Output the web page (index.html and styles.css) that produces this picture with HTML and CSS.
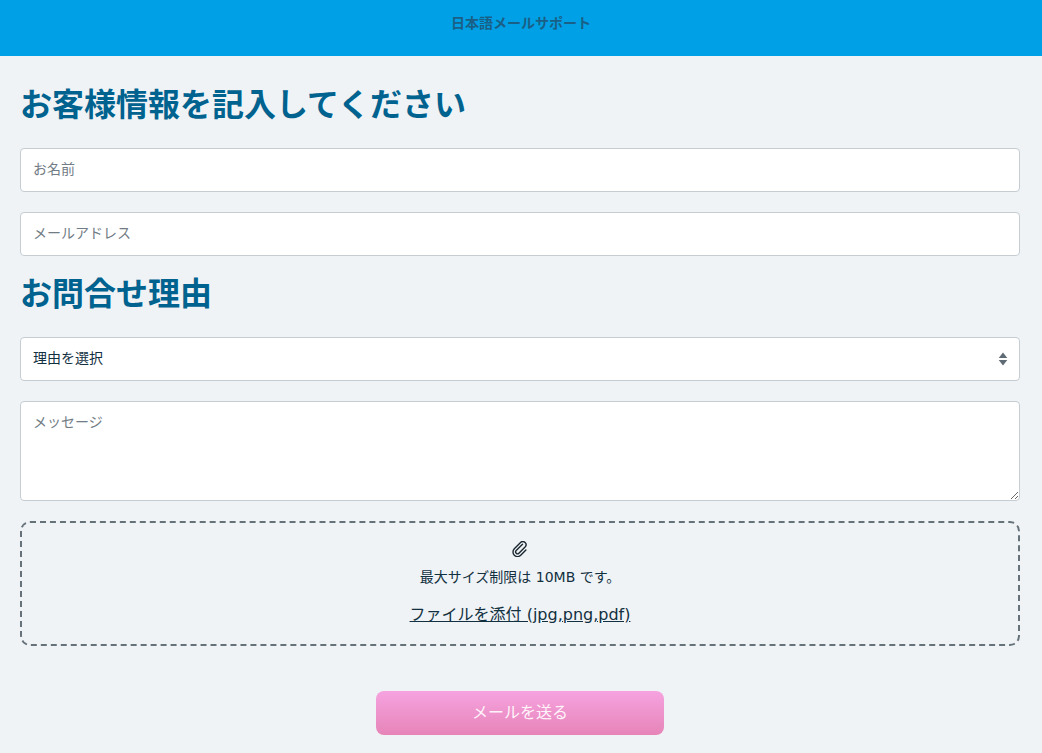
FILE: index.html
```html
<!DOCTYPE html>
<html lang="ja">
<head>
<meta charset="utf-8">
<title>日本語メールサポート</title>
<link rel="stylesheet" href="styles.css">
</head>
<body>
<header class="topbar"><span class="topbar-title">日本語メールサポート</span></header>
<main class="content">
  <form class="form">
    <h1 class="heading heading-first">お客様情報を記入してください</h1>
    <input class="field" type="text" placeholder="お名前">
    <input class="field" type="email" placeholder="メールアドレス">
    <h2 class="heading heading-second">お問合せ理由</h2>
    <div class="select-wrap">
      <select class="field select"><option>理由を選択</option></select>
      <svg class="select-arrows" width="10" height="14" viewBox="0 0 10 14"><path d="M5 0.5 9.3 6H.7zM.7 8h8.6L5 13.5z" fill="#5f6b75"/></svg>
    </div>
    <textarea class="field area" placeholder="メッセージ"></textarea>
    <div class="drop">
      <svg class="clip" width="16" height="16" viewBox="0 0 16 16"><path d="M10.5 3.2 4.2 9.5a1.9 1.9 0 0 0 2.7 2.7l6.4-6.4a3.2 3.2 0 0 0-4.5-4.5L2.3 7.8a4.5 4.5 0 0 0 6.4 6.4l5.2-5.2" fill="none" stroke="#1b2730" stroke-width="1.4" stroke-linecap="round"/></svg>
      <p class="drop-note">最大サイズ制限は 10MB です。</p>
      <a class="drop-link" href="#">ファイルを添付 (jpg,png,pdf)</a>
    </div>
    <div class="actions"><button class="send" type="button">メールを送る</button></div>
  </form>
</main>
</body>
</html>
```
FILE: styles.css
```css
* { box-sizing: border-box; }
html, body { margin: 0; height: 100%; }
body {
  background: #eff3f6;
  color: #12303f;
  font-family: "DejaVu Sans", "Noto Sans CJK JP", sans-serif;
  font-size: 14px;
  overflow: hidden;
}
.topbar {
  height: 56px;
  background: #00a0e6;
  display: flex;
  justify-content: center;
  padding-top: 13px;
}
.topbar-title {
  color: #1a5f85;
  font-size: 14px;
  line-height: 20px;
  font-weight: 700;
}
.content { padding: 0 22px 0 20px; }
.form { display: flex; flex-direction: column; }
.heading {
  margin: 0;
  color: #00628f;
  font-size: 32px;
  font-weight: 700;
  line-height: 32px;
}
.heading-first { margin-top: 33px; margin-bottom: 27px; }
.heading-second { margin-top: 2px; margin-bottom: 27px; }
.field {
  display: block;
  width: 100%;
  height: 44px;
  margin: 0 0 20px;
  padding: 0 12px 2px;
  background: #fff;
  border: 1px solid #c5ccd2;
  border-radius: 4px;
  font: inherit;
  font-size: 14px;
  color: #12303f;
}
.field::placeholder { color: #717c85; opacity: 1; }
.select-wrap { position: relative; }
.select { appearance: none; }
.select-arrows { position: absolute; right: 12px; top: 15px; }
.area { height: 100px; padding-top: 9px; padding-bottom: 0; resize: vertical; }
.drop {
  height: 125px;
  border: 2px dashed #66727a;
  border-radius: 10px;
  display: flex;
  flex-direction: column;
  align-items: center;
  padding-top: 18px;
}
.clip { display: block; }
.drop-note { margin: 10px 0 0; font-size: 14px; line-height: 20px; }
.drop-link { margin-top: 16px; font-size: 16px; line-height: 24px; color: #12303f; }
.actions { display: flex; justify-content: center; margin-top: 45px; }
.send {
  width: 288px;
  height: 44px;
  padding: 0 0 4px;
  border: 0;
  border-radius: 8px;
  background: linear-gradient(#f6a3e0, #e684b8);
  color: #fff3fa;
  font: inherit;
  font-size: 16px;
}
```
